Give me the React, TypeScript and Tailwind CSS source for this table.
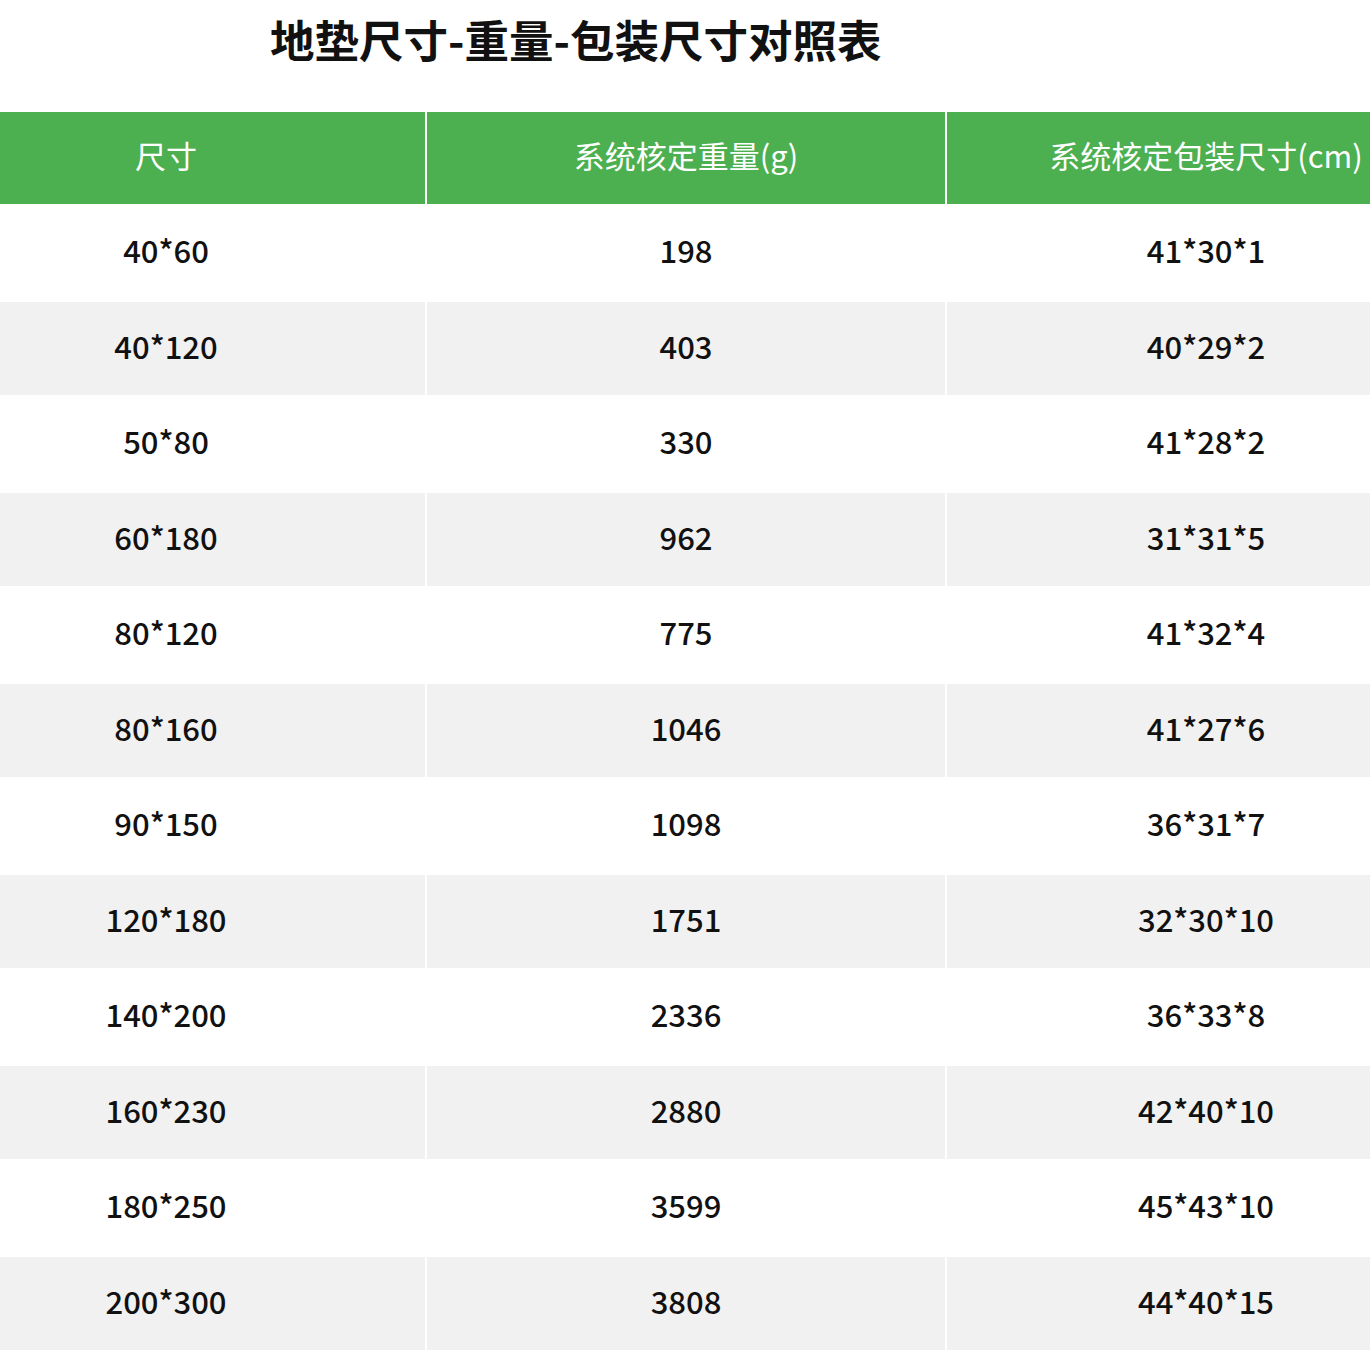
const HEADERS = ["尺寸", "系统核定重量(g)", "系统核定包装尺寸(cm)"];

const ROWS: [string, string, string][] = [
  ["40*60", "198", "41*30*1"],
  ["40*120", "403", "40*29*2"],
  ["50*80", "330", "41*28*2"],
  ["60*180", "962", "31*31*5"],
  ["80*120", "775", "41*32*4"],
  ["80*160", "1046", "41*27*6"],
  ["90*150", "1098", "36*31*7"],
  ["120*180", "1751", "32*30*10"],
  ["140*200", "2336", "36*33*8"],
  ["160*230", "2880", "42*40*10"],
  ["180*250", "3599", "45*43*10"],
  ["200*300", "3808", "44*40*15"],
];

const font = { fontFamily: '"Noto Sans CJK SC", "Noto Sans", sans-serif' };

export default function App() {
  return (
    <div className="w-[1370px] h-[1370px] bg-white overflow-hidden" style={font}>
      {/* Title */}
      <div className="h-[112px] pt-[9px] pl-[270px]">
        <h1 className="text-[44.5px] leading-[60px] font-bold text-[#111]">地垫尺寸-重量-包装尺寸对照表</h1>
      </div>

      {/* Table, wider than the viewport and cropped at both sides */}
      <div className="ml-[-93px] w-[1558px]">
        <div className="flex gap-[2px] h-[92px]">
          {HEADERS.map((h) => (
            <div key={h} className="w-[518px] bg-[#4caf50] flex items-center justify-center pb-[6px] text-white text-[31px]">
              {h}
            </div>
          ))}
        </div>
        {ROWS.map((row, i) => {
          const odd = i % 2 === 1;
          return (
            <div key={row[0]} className={odd ? "flex gap-[2px] h-[93.5px] bg-white" : "flex gap-[2px] h-[97.5px] bg-white"}>
              {row.map((cell, j) => (
                <div
                  key={j}
                  className={
                    odd
                      ? "w-[518px] bg-[#f1f1f1] flex items-center justify-center pb-[5px] text-[31px] font-medium text-[#111]"
                      : "w-[518px] bg-white flex items-center justify-center pb-[5px] text-[31px] font-medium text-[#111]"
                  }
                >
                  {cell}
                </div>
              ))}
            </div>
          );
        })}
      </div>
    </div>
  );
}
